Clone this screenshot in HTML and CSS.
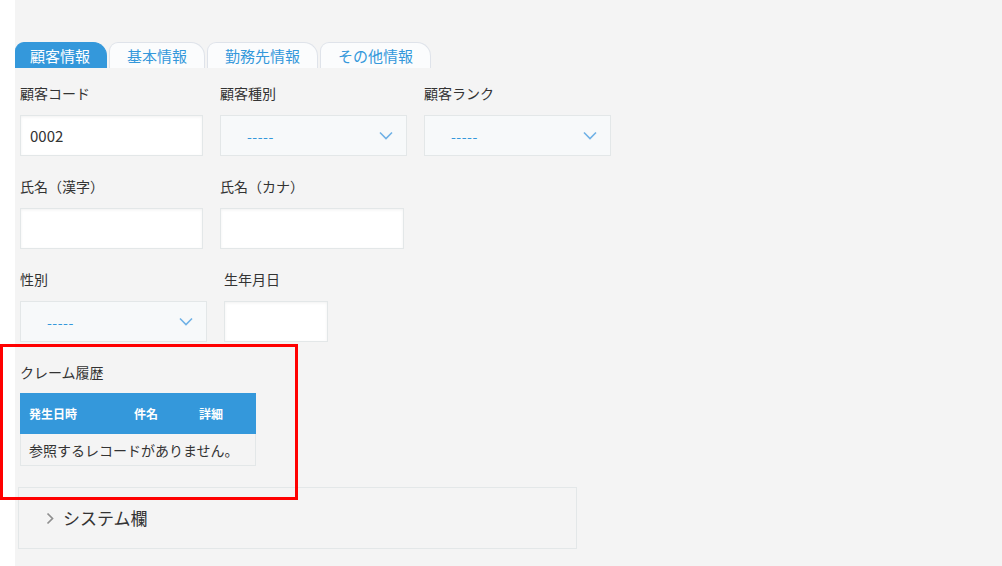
FILE: index.html
```html
<!DOCTYPE html>
<html lang="ja">
<head>
<meta charset="utf-8">
<title>顧客情報</title>
<link rel="stylesheet" href="styles.css">
</head>
<body>
<div class="page">
  <div class="gutter"></div>
  <main class="main">
    <nav class="tabs">
      <span class="tab active">顧客情報</span>
      <span class="tab">基本情報</span>
      <span class="tab">勤務先情報</span>
      <span class="tab">その他情報</span>
    </nav>
    <section class="form">
      <div class="row">
        <div class="field w183">
          <div class="label">顧客コード</div>
          <div class="input">0002</div>
        </div>
        <div class="field w187">
          <div class="label">顧客種別</div>
          <div class="select"><span class="dash">-----</span>
            <svg class="chev" width="14" height="9" viewBox="0 0 14 9"><polyline points="1,1.5 7,7.5 13,1.5" fill="none" stroke="#6fb1e6" stroke-width="1.6"/></svg>
          </div>
        </div>
        <div class="field w187">
          <div class="label">顧客ランク</div>
          <div class="select"><span class="dash">-----</span>
            <svg class="chev" width="14" height="9" viewBox="0 0 14 9"><polyline points="1,1.5 7,7.5 13,1.5" fill="none" stroke="#6fb1e6" stroke-width="1.6"/></svg>
          </div>
        </div>
      </div>
      <div class="row">
        <div class="field w183">
          <div class="label">氏名（漢字）</div>
          <div class="input"></div>
        </div>
        <div class="field w184">
          <div class="label">氏名（カナ）</div>
          <div class="input"></div>
        </div>
      </div>
      <div class="row">
        <div class="field w187">
          <div class="label">性別</div>
          <div class="select"><span class="dash">-----</span>
            <svg class="chev" width="14" height="9" viewBox="0 0 14 9"><polyline points="1,1.5 7,7.5 13,1.5" fill="none" stroke="#6fb1e6" stroke-width="1.6"/></svg>
          </div>
        </div>
        <div class="field w104">
          <div class="label">生年月日</div>
          <div class="input"></div>
        </div>
      </div>
      <div class="subtable">
        <div class="label sublabel">クレーム履歴</div>
        <div class="table">
          <div class="thead">
            <span class="th c1">発生日時</span>
            <span class="th c2">件名</span>
            <span class="th c3">詳細</span>
          </div>
          <div class="tbody">参照するレコードがありません。</div>
        </div>
      </div>
      <div class="group">
        <svg class="gchev" width="8" height="13" viewBox="0 0 8 13"><polyline points="1.5,1.5 6.5,6.5 1.5,11.5" fill="none" stroke="#8f8f8f" stroke-width="1.7"/></svg>
        <span class="gtitle">システム欄</span>
      </div>
    </section>
  </main>
  <div class="annotation"></div>
</div>
</body>
</html>
```

FILE: styles.css
```css
* { box-sizing: border-box; }
html, body {
  margin: 0;
  padding: 0;
  background: #fff;
}
body {
  font-family: "Noto Sans CJK JP", "Noto Sans", sans-serif;
  color: #333;
  font-size: 14px;
}
.page {
  position: relative;
  display: flex;
  width: 1002px;
  height: 566px;
  overflow: hidden;
}
.gutter {
  width: 15px;
  flex: none;
  background: #fff;
}
.main {
  flex: 1;
  background: #f4f4f4;
  padding-top: 42px;
}
.tabs {
  display: flex;
  gap: 2px;
  height: 26px;
  align-items: stretch;
}
.tab {
  display: flex;
  align-items: center;
  padding: 0 17px 0 17px;
  font-size: 15px;
  line-height: 1;
  color: #3498db;
  background: #fbfcfd;
  border: 1px solid #dfe3ea;
  border-bottom: none;
  border-radius: 9px 14px 0 0;
}
.tab.active {
  background: #3498db;
  color: #fff;
  border-color: #3498db;
  padding: 0 16px 0 14px;
}
.form {
  padding: 17px 0 0 5px;
  display: flex;
  flex-direction: column;
  gap: 22px;
}
.row {
  display: flex;
  gap: 17px;
}
.field {
  display: flex;
  flex-direction: column;
}
.w183 { width: 183px; }
.w184 { width: 184px; }
.w187 { width: 187px; }
.w104 { width: 104px; }
.label {
  font-size: 14px;
  line-height: 17px;
  height: 20px;
  margin-bottom: 10px;
  color: #333;
  white-space: nowrap;
}
.input {
  height: 41px;
  background: #fff;
  border: 1px solid #e3e7e8;
  box-shadow: inset 0 1px 3px rgba(0, 0, 0, 0.06);
  padding: 0 9px;
  display: flex;
  align-items: center;
  font-size: 15px;
  color: #333;
}
.select {
  height: 41px;
  background: #f7f9fa;
  border: 1px solid #e3e7e8;
  display: flex;
  align-items: center;
  justify-content: space-between;
  padding: 0 13px 0 26px;
}
.dash {
  color: #3498db;
  font-size: 14px;
  letter-spacing: 0.5px;
}
.chev { display: block; }
.subtable {
  display: flex;
  flex-direction: column;
}
.sublabel {
  margin-bottom: 9px;
}
.table {
  width: 236px;
  border: 1px solid #e3e7e8;
}
.thead {
  display: flex;
  height: 41px;
  align-items: center;
  background: #3498db;
  margin: -1px -1px 0 -1px;
}
.th {
  color: #fff;
  font-size: 12px;
  font-weight: bold;
  padding-left: 9px;
}
.c1 { width: 105px; }
.c2 { width: 65px; }
.c3 { width: 66px; }
.tbody {
  height: 31px;
  display: flex;
  align-items: center;
  padding-left: 8px;
  font-size: 14px;
  color: #333;
  background: #f4f4f4;
  white-space: nowrap;
}
.group {
  margin-left: -2px;
  width: 559px;
  height: 62px;
  margin-top: -1px;
  border: 1px solid #e3e7e8;
  display: flex;
  align-items: center;
  padding-left: 27px;
  gap: 9px;
}
.gchev { display: block; }
.gtitle {
  font-size: 17px;
  color: #333;
  line-height: 1;
  margin-top: -2px;
}
.annotation {
  position: absolute;
  left: 0;
  top: 344px;
  width: 298px;
  height: 156px;
  border: 3px solid #ff0000;
  pointer-events: none;
}
```
